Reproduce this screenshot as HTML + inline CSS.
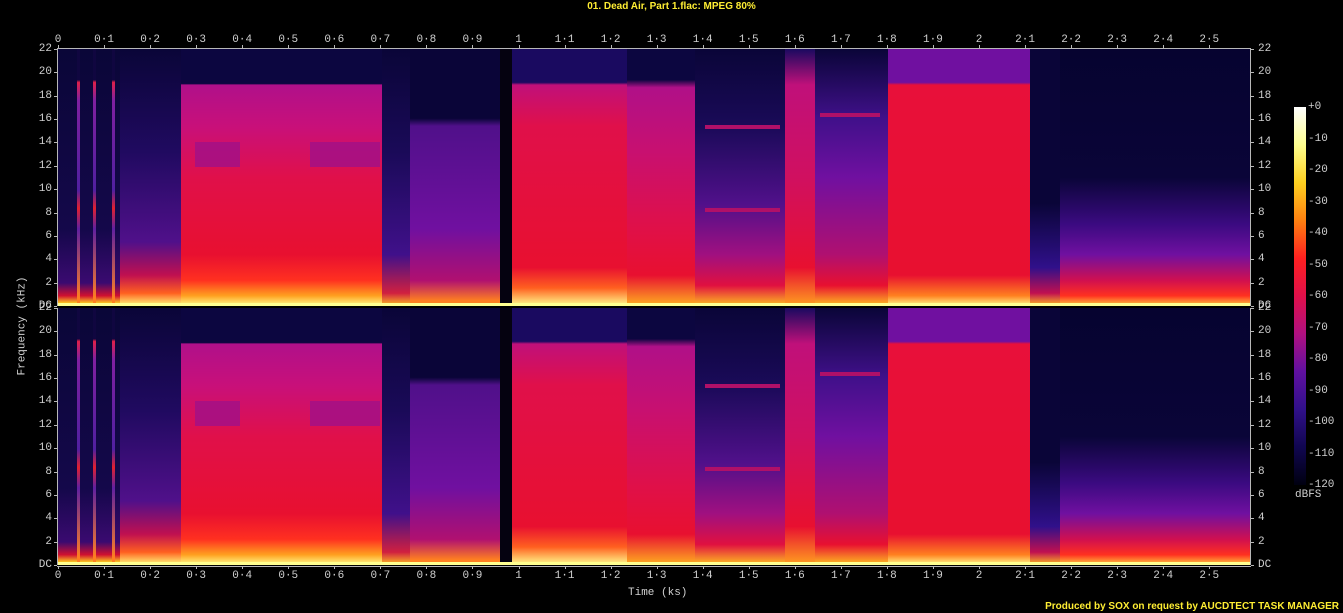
<!DOCTYPE html>
<html><head><meta charset="utf-8"><style>
body{margin:0;width:1343px;height:613px;background:#000;overflow:hidden;position:relative;font-family:"Liberation Mono","DejaVu Sans Mono",monospace;}
.t{position:absolute;color:#d0d0d0;font-size:11px;line-height:11px;white-space:nowrap}
.seg{position:absolute}
.ax{position:absolute;background:#b8b8b8}
</style></head><body>
<div class="t" style="left:0;width:1343px;top:1px;text-align:center;color:#ffee33;font-weight:bold;font-family:'Liberation Sans',sans-serif;font-size:10px">01. Dead Air, Part 1.flac: MPEG 80%</div>
<div class="t" style="right:4px;top:601px;color:#ffee33;font-weight:bold;font-family:'Liberation Sans',sans-serif;font-size:10px">Produced by SOX on request by AUCDTECT TASK MANAGER</div>
<div class="t" style="left:-22px;top:325px;transform:rotate(-90deg);transform-origin:center;width:90px;text-align:center;">Frequency (kHz)</div>
<div class="t" style="left:628px;top:588px;">Time (ks)</div>
<div class="seg" style="left:1294px;top:107px;width:12px;height:378px;background:linear-gradient(#ffffff 0%,#ffff90 10%,#ffd020 20%,#ff8010 30%,#ff2020 40%,#e0104a 50%,#b01080 60%,#6010a0 70%,#30108a 80%,#100650 90%,#000010 100%)"></div>
<div class="t" style="left:1295px;top:490px;">dBFS</div>
<div id="root"></div>
<script>
var R=document.getElementById('root'),h='';
function add(s){h+=s}
var segs=[
[58,120,'#0a0638 0%,#14084a 70%,#3a0a70 91%,#d01030 96%,#ffd020 99%'],
[120,181,'#0a0538 0%,#200a60 40%,#50108a 75%,#c01050 88%,#ff6020 95%,#ffff80 100%'],
[181,382,'#0c0640 0%,#0c0640 13.5%,#b0108a 14%,#c8107a 30%,#e0104a 50%,#e81030 80%,#ff3020 90%,#ffa020 96%,#ffff90 100%'],
[382,410,'#0a0538 0%,#1a0a58 40%,#40108a 80%,#d02040 95%,#ffc020 100%'],
[410,500,'#0a0538 0%,#0a0538 27%,#50108a 30%,#7010a0 70%,#b01070 90%,#ff8020 98%'],
[500,512,'#050210 0%,#050210 100%'],
[512,627,'#1a0a60 0%,#1a0a60 13%,#c0107a 14%,#e0104a 30%,#e81030 85%,#ff6020 93%,#ffff90 100%'],
[627,695,'#0c0640 0%,#0c0640 12%,#b01088 15%,#c81070 40%,#e01048 70%,#e81030 88%,#ffb020 100%'],
[695,785,'#0a0538 0%,#1a0a58 30%,#50108a 60%,#a01080 80%,#e01040 92%,#ffc020 100%'],
[785,815,'#1a0a60 0%,#c0107a 14%,#d01060 50%,#e81030 85%,#ffa020 100%'],
[815,888,'#0a0538 0%,#40108a 27%,#7010a0 50%,#b01070 80%,#e81030 92%,#ffc020 100%'],
[888,1030,'#7010a0 0%,#7010a0 13%,#e8103a 14%,#e81030 88%,#ff8020 96%,#ffff90 100%'],
[1030,1060,'#0a0538 0%,#0a0538 60%,#30108a 85%,#c01050 95%,#ffc020 100%'],
[1060,1250,'#060330 0%,#0a0538 50%,#3a0a80 68%,#7010a0 80%,#d01050 90%,#ff3020 96%,#ffd040 100%']];
var spikes=[77,93,112];
[[49,306],[308,565]].forEach(function(p){
 var top=p[0],H=p[1]-p[0];
 segs.forEach(function(s){add('<div class="seg" style="left:'+s[0]+'px;top:'+top+'px;width:'+(s[1]-s[0])+'px;height:'+H+'px;background:linear-gradient('+s[2]+')"></div>')});
 [[195,240],[310,380]].forEach(function(b){add('<div class="seg" style="left:'+b[0]+'px;top:'+(top+H*0.36)+'px;width:'+(b[1]-b[0])+'px;height:'+(H*0.1)+'px;background:#a01088;opacity:.8"></div>')});
 spikes.forEach(function(x){add('<div class="seg" style="left:'+x+'px;top:'+top+'px;width:3px;height:'+H+'px;background:linear-gradient(#100640 0%,#100640 12%,#e0204a 13%,#8020a0 20%,#5020a0 55%,#e02030 62%,#6020a0 70%,#ff8020 97%)"></div>')});
 [[705,780,29.5],[705,780,62],[820,880,25]].forEach(function(b){add('<div class="seg" style="left:'+b[0]+'px;top:'+(top+H*b[2]/100)+'px;width:'+(b[1]-b[0])+'px;height:4px;background:#b01068"></div>')});
 add('<div class="seg" style="left:58px;top:'+(top+H-3)+'px;width:1192px;height:3px;background:#ffff90"></div>');
 add('<div class="ax" style="left:57px;top:'+top+'px;width:1px;height:'+H+'px"></div>');
 add('<div class="ax" style="left:1250px;top:'+top+'px;width:1px;height:'+H+'px"></div>');
 for(var k=22;k>=0;k-=2){var y=top+H*(22-k)/22;var lab=k==0?'DC':k;
  add('<div class="t" style="left:0;width:52px;text-align:right;top:'+(y-5)+'px">'+lab+'</div>');
  add('<div class="t" style="left:1258px;top:'+(y-5)+'px">'+lab+'</div>');
  add('<div class="ax" style="left:54px;top:'+y+'px;width:3px;height:1px"></div><div class="ax" style="left:1251px;top:'+y+'px;width:3px;height:1px"></div>');}
});
add('<div class="ax" style="left:57px;top:48px;width:1194px;height:1px"></div><div class="ax" style="left:57px;top:566px;width:1194px;height:1px"></div>');
for(var i=0;i<=25;i++){var x=58+i*46.05;var lab=i==0?'0':(i%10==0?(i/10):(Math.floor(i/10)+'·'+(i%10)));
 add('<div class="t" style="left:'+(x-20)+'px;width:40px;text-align:center;top:35px">'+lab+'</div>');
 add('<div class="t" style="left:'+(x-20)+'px;width:40px;text-align:center;top:571px">'+lab+'</div>');
 add('<div class="ax" style="left:'+x+'px;top:45px;width:1px;height:3px"></div><div class="ax" style="left:'+x+'px;top:566px;width:1px;height:3px"></div>');}
for(var d=0;d<=12;d++){var y=107+d*31.5;add('<div class="t" style="left:1308px;top:'+(y-5)+'px">'+(d==0?'+0':'-'+d*10)+'</div>');}
R.innerHTML=h;
</script>
</body></html>
